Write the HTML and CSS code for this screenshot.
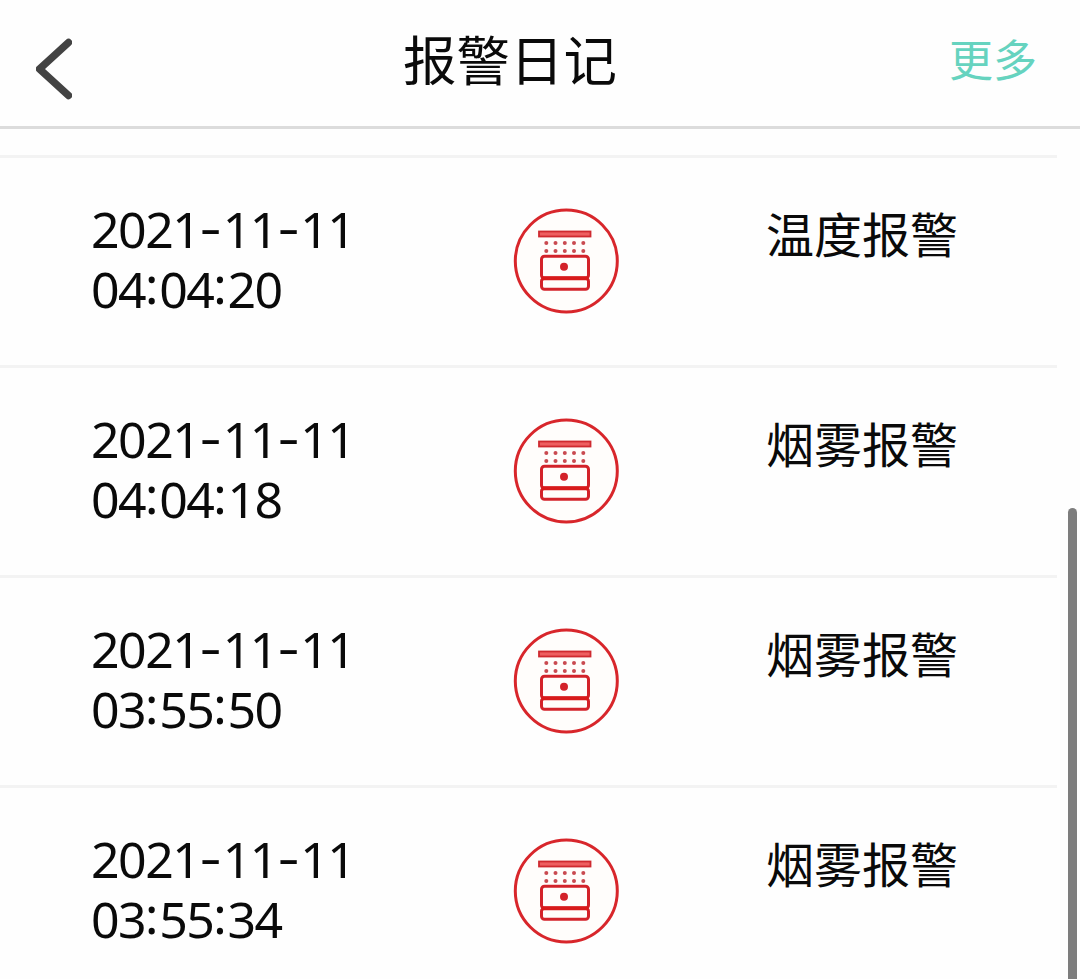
FILE: index.html
```html
<!DOCTYPE html>
<html lang="zh-CN">
<head>
<meta charset="utf-8">
<title>报警日记</title>
<link rel="stylesheet" href="styles.css">
</head>
<body>
<svg class="defs" width="0" height="0" aria-hidden="true">
  <symbol id="detector" viewBox="0 0 108 108">
    <circle cx="54.300" cy="54" r="51" fill="#fffdfb" stroke="#d8262b" stroke-width="3"/>
    <rect x="27" y="24.500" width="51.500" height="5" fill="#ee5f60" stroke="#cf2a30" stroke-width="1.800"/>
    <g fill="#c94a50">
      <circle cx="34.300" cy="36" r="2"/><circle cx="43.500" cy="36" r="2"/><circle cx="52.800" cy="36" r="2"/><circle cx="62" cy="36" r="2"/><circle cx="71.300" cy="36" r="2"/>
      <circle cx="34.300" cy="44" r="2"/><circle cx="43.500" cy="44" r="2"/><circle cx="52.800" cy="44" r="2"/><circle cx="62" cy="44" r="2"/><circle cx="71.300" cy="44" r="2"/>
    </g>
    <rect x="29.500" y="49.200" width="47" height="22" rx="3" fill="none" stroke="#d3222a" stroke-width="3"/>
    <rect x="29.500" y="71.200" width="47" height="11" rx="3" fill="none" stroke="#d3222a" stroke-width="3"/>
    <path d="M29.500 71.200H76.500" stroke="#d81a1a" stroke-width="4"/>
    <circle cx="52" cy="59.700" r="4" fill="#d3222a"/>
  </symbol>
</svg>
<div class="screen">
  <header class="bar">
    <svg class="back" viewBox="0 0 36 64"><path d="M32.500 5.500L3.500 32L32.500 58.500" fill="none" stroke="#434343" stroke-width="7.400" stroke-linecap="round" stroke-linejoin="round"/></svg>
    <h1 class="title">报警日记</h1>
    <span class="more">更多</span>
  </header>
  <main class="list">
    <div class="row">
      <div class="time">2021<span class="dash">-</span>11<span class="dash">-</span>11<br>04<span class="colon">:</span>04<span class="colon">:</span>20</div>
      <svg class="icon"><use href="#detector"/></svg>
      <div class="kind">温度报警</div>
    </div>
    <div class="row">
      <div class="time">2021<span class="dash">-</span>11<span class="dash">-</span>11<br>04<span class="colon">:</span>04<span class="colon">:</span>18</div>
      <svg class="icon"><use href="#detector"/></svg>
      <div class="kind">烟雾报警</div>
    </div>
    <div class="row">
      <div class="time">2021<span class="dash">-</span>11<span class="dash">-</span>11<br>03<span class="colon">:</span>55<span class="colon">:</span>50</div>
      <svg class="icon"><use href="#detector"/></svg>
      <div class="kind">烟雾报警</div>
    </div>
    <div class="row">
      <div class="time">2021<span class="dash">-</span>11<span class="dash">-</span>11<br>03<span class="colon">:</span>55<span class="colon">:</span>34</div>
      <svg class="icon"><use href="#detector"/></svg>
      <div class="kind">烟雾报警</div>
    </div>
  </main>
  <div class="scrollbar"></div>
</div>
</body>
</html>
```
FILE: styles.css
```css
* { box-sizing: border-box; }
body { margin: 0; background: #fefefe; color: #0a0a0a; font-family: "Noto Sans CJK SC", sans-serif; }
.defs { position: absolute; }
.screen { position: relative; width: 1080px; height: 979px; overflow: hidden; }
.bar { display: grid; grid-template-columns: 403px 1fr 131px; align-items: start; height: 129px; border-bottom: 3px solid #dcdcdc; }
.back { width: 36px; height: 64px; margin: 37px 0 0 36px; }
.title { margin: 18px 0 0; font-size: 53.500px; line-height: 80px; font-weight: 400; white-space: nowrap; }
.more { margin-top: 28px; font-size: 44px; line-height: 60px; color: #66d3bf; white-space: nowrap; }
.list { padding-top: 26px; }
.row { display: grid; grid-template-columns: 421px 254px 1fr; align-items: start; width: 1057px; height: 210px; padding: 43px 0 0 91px; border-top: 3px solid #f3f3f3; }
.time { margin-top: -2px; font-family: "Noto Sans", sans-serif; font-size: 50px; line-height: 60px; letter-spacing: -1.500px; white-space: nowrap; }
.dash, .colon { display: inline-block; text-align: center; letter-spacing: 0; }
.dash { width: 23.300px; transform: translateY(-3px) scaleX(1.35); }
.colon { width: 14px; transform: translate(-0.500px, -4px); }
.icon { width: 108px; height: 108px; margin-top: 6px; }
.kind { margin-top: -4px; font-size: 48px; line-height: 70px; white-space: nowrap; }
.scrollbar { position: absolute; left: 1068px; top: 508px; width: 9px; height: 480px; border-radius: 5px; background: #7d7d7d; }
```
